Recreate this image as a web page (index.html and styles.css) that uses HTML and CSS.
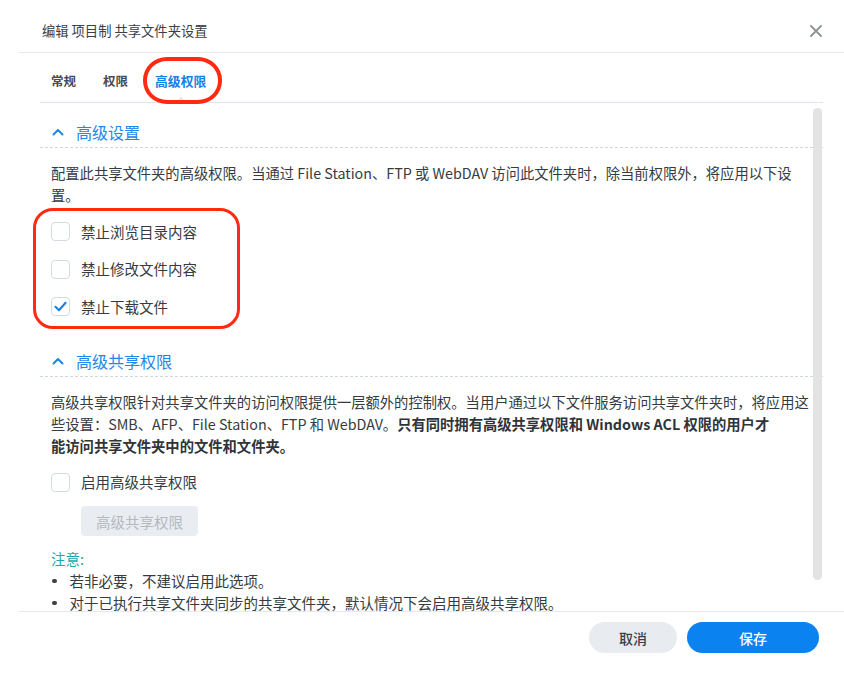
FILE: index.html
```html
<!DOCTYPE html>
<html lang="zh-CN">
<head>
<meta charset="utf-8">
<title>编辑 项目制 共享文件夹设置</title>
<link rel="stylesheet" href="styles.css">
</head>
<body>
<div class="dialog">
  <header class="titlebar">
    <span class="title">编辑 项目制 共享文件夹设置</span>
    <span class="close" aria-label="关闭">
      <svg width="12" height="12" viewBox="0 0 12 12"><path d="M1 1L11 11M11 1L1 11" stroke="#8f959b" stroke-width="1.9" stroke-linecap="round" fill="none"/></svg>
    </span>
  </header>

  <nav class="tabs">
    <span class="tab">常规</span>
    <span class="tab">权限</span>
    <span class="tab active">高级权限</span>
  </nav>

  <div class="scroll">
    <div class="section-head">
      <svg class="chev" width="12" height="8" viewBox="0 0 12 8"><path d="M1.5 6.5L6 2L10.5 6.5" stroke="#1f86ea" stroke-width="2" fill="none" stroke-linecap="round" stroke-linejoin="round"/></svg>
      <span>高级设置</span>
    </div>
    <p class="para">配置此共享文件夹的高级权限。当通过 File Station、FTP 或 WebDAV 访问此文件夹时，除当前权限外，将应用以下设<br>置。</p>
    <div class="checks">
      <label class="check"><span class="box"></span><span>禁止浏览目录内容</span></label>
      <label class="check"><span class="box"></span><span>禁止修改文件内容</span></label>
      <label class="check"><span class="box"><svg width="19" height="19" viewBox="0 0 19 19"><path d="M4.5 9.8L8 13.2L14.6 5.8" stroke="#1a80e6" stroke-width="2.1" fill="none" stroke-linecap="round" stroke-linejoin="round"/></svg></span><span>禁止下载文件</span></label>
    </div>

    <div class="section-head second">
      <svg class="chev" width="12" height="8" viewBox="0 0 12 8"><path d="M1.5 6.5L6 2L10.5 6.5" stroke="#1f86ea" stroke-width="2" fill="none" stroke-linecap="round" stroke-linejoin="round"/></svg>
      <span>高级共享权限</span>
    </div>
    <p class="para">高级共享权限针对共享文件夹的访问权限提供一层额外的控制权。当用户通过以下文件服务访问共享文件夹时，将应用这<br>些设置：SMB、AFP、File Station、FTP 和 WebDAV。<b>只有同时拥有高级共享权限和 Windows ACL 权限的用户才<br>能访问共享文件夹中的文件和文件夹。</b></p>
    <div class="checks">
      <label class="check"><span class="box"></span><span>启用高级共享权限</span></label>
    </div>
    <button class="btn-disabled" type="button">高级共享权限</button>
    <div class="note">注意:</div>
    <ul class="bullets">
      <li>若非必要，不建议启用此选项。</li>
      <li>对于已执行共享文件夹同步的共享文件夹，默认情况下会启用高级共享权限。</li>
    </ul>
    <div class="scrollbar"></div>
  </div>

  <footer class="footer">
    <button class="btn btn-cancel" type="button">取消</button>
    <button class="btn btn-save" type="button">保存</button>
  </footer>

  <div class="mark mark-tab"></div>
  <div class="mark mark-checks"></div>
</div>
</body>
</html>
```

FILE: styles.css
```css
* { box-sizing: border-box; }

html, body {
  margin: 0;
  padding: 0;
  background: #ffffff;
}

body {
  font-family: "Noto Sans CJK SC", "Noto Sans", sans-serif;
  color: #353b41;
  font-size: 14.5px;
}

.dialog {
  position: relative;
  width: 844px;
  height: 688px;
  overflow: hidden;
  background: #fff;
}

/* title bar */
.titlebar {
  display: flex;
  justify-content: space-between;
  align-items: center;
  height: 53px;
  margin-left: 19px;
  padding: 0 22px 0 23px;
  border-bottom: 1px solid #e4e9ef;
}

.title {
  font-size: 13.3px;
  line-height: 20px;
  color: #3a4046;
  margin-top: 10px;
}

.close {
  display: flex;
  margin-top: 10px;
}

/* tabs */
.tabs {
  display: flex;
  gap: 27px;
  height: 50px;
  margin: 0 21px 0 40px;
  padding: 18px 0 0 11px;
  border-bottom: 1px solid #e1e6ec;
}

.tab {
  position: relative;
  font-size: 12.5px;
  line-height: 20px;
  font-weight: 700;
  color: #464c52;
}

.tab.active {
  color: #1580e8;
  font-size: 12.8px;
}

.tab.active::after {
  content: "";
  position: absolute;
  left: 50%;
  top: 27.5px;
  width: 7px;
  height: 7px;
  background: #fff;
  border-left: 1px solid #d6dde4;
  border-top: 1px solid #d6dde4;
  transform: translateX(-50%) rotate(45deg);
}

/* scroll area */
.scroll {
  position: relative;
  height: 508px;
  margin: 0 21px 0 40px;
  padding-top: 14px;
  overflow: hidden;
}

.scrollbar {
  position: absolute;
  top: 5px;
  right: 1px;
  width: 9px;
  height: 472px;
  border-radius: 5px;
  background: #e3e3e3;
}

.section-head {
  display: flex;
  align-items: center;
  gap: 12px;
  height: 31px;
  padding-left: 12px;
  border-bottom: 1px dashed #cfd7df;
  color: #1f86ea;
  font-size: 16px;
}

.section-head.second {
  margin-top: 20px;
}

.chev {
  flex: none;
}

.para {
  margin: 14px 0 0;
  padding: 0 6px 0 11px;
  font-size: 14.3px;
  line-height: 22px;
  color: #353b41;
}

.para b {
  font-weight: 700;
  color: #2f3439;
}

.checks {
  margin-top: 7px;
  padding-left: 11px;
}

.check {
  display: flex;
  align-items: center;
  gap: 11px;
  height: 37.5px;
  line-height: 22px;
}

.box {
  flex: none;
  width: 19px;
  height: 19px;
  border: 1px solid #d3dae1;
  border-radius: 4px;
  background: #fff;
  display: flex;
  align-items: center;
  justify-content: center;
}

.box svg {
  display: block;
  margin: -1px;
}

.btn-disabled {
  display: block;
  margin: 5px 0 0 41px;
  width: 117px;
  height: 30px;
  border: none;
  border-radius: 4px;
  background: #e9edf1;
  color: #b3b9bf;
  font-family: inherit;
  font-size: 14.5px;
  padding: 0;
}

.note {
  margin-top: 12px;
  padding-left: 11px;
  line-height: 22px;
  color: #19a9a9;
}

.bullets {
  list-style: none;
  margin: 0;
  padding: 0 0 0 11px;
}

.bullets li {
  display: flex;
  align-items: center;
  line-height: 22px;
}

.bullets li::before {
  content: "";
  flex: none;
  width: 4.5px;
  height: 4.5px;
  border-radius: 50%;
  background: #3a4046;
  margin: 0 13px 0 1px;
}

/* footer */
.footer {
  display: flex;
  justify-content: flex-end;
  gap: 10px;
  margin-left: 19px;
  padding: 10px 25px 0 0;
  border-top: 1px solid #e4e9ef;
}

.btn {
  height: 31px;
  border: none;
  border-radius: 16px;
  font-family: inherit;
  font-size: 14px;
  font-weight: 500;
  padding: 0;
}

.btn-cancel {
  width: 88px;
  background: #e8ecf0;
  color: #3a4046;
}

.btn-save {
  width: 132px;
  background: #0a82ef;
  color: #ffffff;
}

/* red annotation marks */
.mark {
  position: absolute;
  border: 3.5px solid #ff2a10;
  pointer-events: none;
}

.mark-tab {
  left: 143px;
  top: 57px;
  width: 79px;
  height: 47px;
  border-width: 4px;
  border-radius: 24px / 23px;
}

.mark-checks {
  left: 33px;
  top: 208px;
  width: 207px;
  height: 121px;
  border-radius: 20px;
}
```
